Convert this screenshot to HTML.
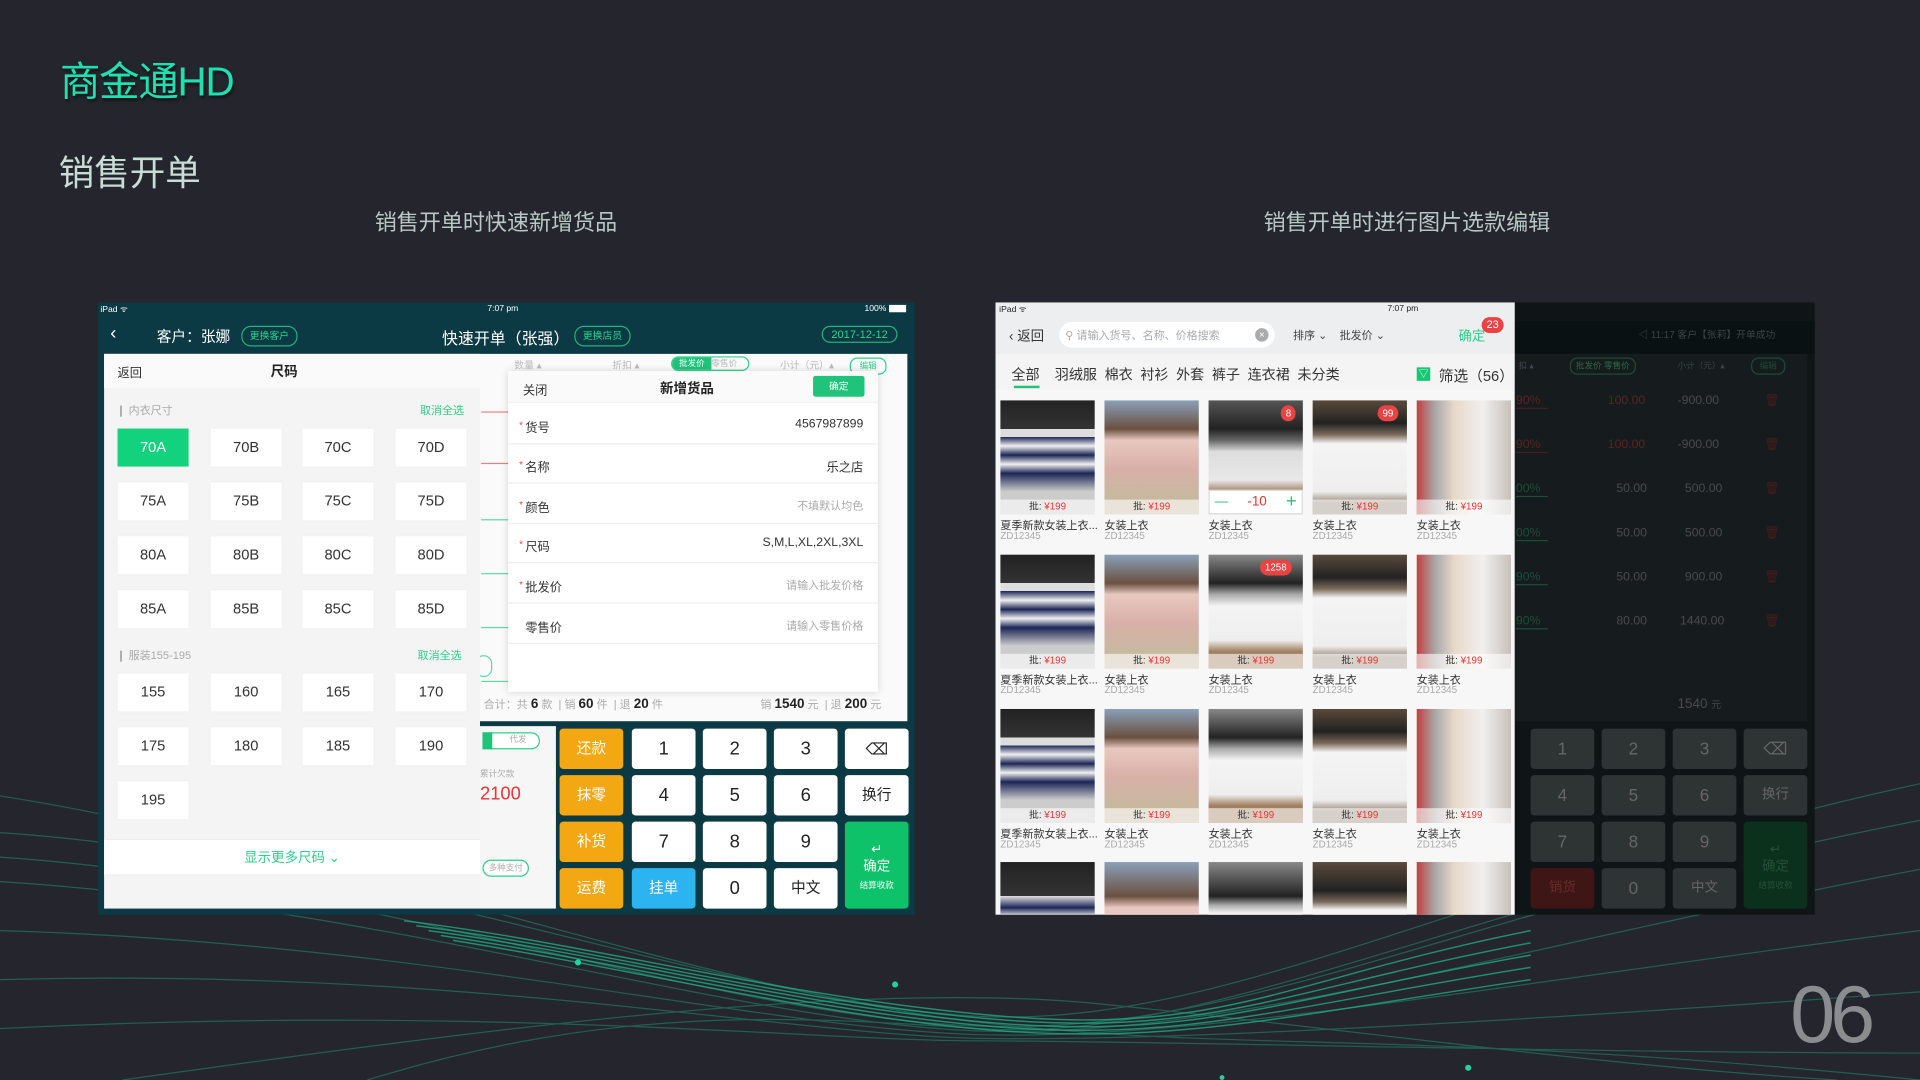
<!DOCTYPE html>
<html><head><meta charset="utf-8">
<style>
*{margin:0;padding:0;box-sizing:border-box}
html,body{width:1920px;height:1080px;overflow:hidden;background:#25252d}
#s{position:absolute;left:0;top:0;width:1568px;height:882px;transform:scale(1.22449);transform-origin:0 0;font-family:"Liberation Sans","Noto Sans CJK SC",sans-serif;background:#25252d;overflow:hidden}
.a{position:absolute}
.t{position:absolute;white-space:nowrap}
.sz{position:absolute;width:58px;height:31px;background:#fff;color:#333;font-size:12px;text-align:center;line-height:31px;box-shadow:0 0 2px rgba(0,0,0,.06)}
.row{position:absolute;left:415px;width:302px;height:32px;border-bottom:1px solid #eee;font-size:10px;color:#333}
.row .l{position:absolute;left:14px;top:10px}
.row .r{position:absolute;right:12px;top:10px}
.st{color:#e44;font-size:8px;position:absolute;left:9px;top:12px}
.k{position:absolute;width:52px;height:33px;border-radius:3px;background:#fff;color:#222;font-size:15px;text-align:center;line-height:33px}
.o{background:#f3a712;color:#fff;font-size:12px}
.c{position:absolute;width:77px;height:120px}
.im{position:absolute;left:0;top:0;width:77px;height:93px}
.pr{position:absolute;left:0;top:81px;width:77px;height:12px;background:rgba(255,255,255,.6);font-size:8px;text-align:center;line-height:12px;color:#333}
.pr b{color:#e33;font-weight:normal}
.nm{position:absolute;left:0;top:95px;font-size:9px;color:#333;white-space:nowrap}
.cd{position:absolute;left:0;top:106px;font-size:8px;color:#aaa}
.dk{position:absolute;width:52px;height:33px;border-radius:3px;background:#2e3334;color:#666;font-size:14px;text-align:center;line-height:33px}
.bd{position:absolute;background:#e94343;color:#fff;font-size:8px;border-radius:7px;height:13px;line-height:13px;padding:0 4px}
</style></head><body><div id="s">

<svg class="a" style="left:0;top:600px" width="1568" height="282" viewBox="0 600 1568 282">
<g fill="none" stroke="#1d9a78" stroke-width="1" opacity=".5">
<path d="M0 680 C300 700 600 820 800 830 S1200 720 1568 640"/>
<path d="M0 700 C300 720 580 830 800 838 S1200 740 1568 670"/>
<path d="M0 720 C320 740 600 835 800 842 S1250 770 1568 710"/>
<path d="M0 760 C350 770 620 840 800 845 S1250 800 1568 760"/>
<path d="M0 800 C380 790 640 845 800 848 S1300 830 1568 810"/>
<path d="M0 840 C400 820 660 850 800 850 S1300 860 1568 860"/>
<path d="M300 882 C500 820 650 830 800 840 S1100 780 1400 700"/>
<path d="M0 650 C260 690 580 810 800 835 S1150 840 1568 882"/>
<path d="M100 882 C400 840 700 800 900 820 S1300 870 1500 882"/>
</g>
<g fill="none" stroke="#20b088" stroke-width="1.2" opacity=".75">
<path d="M330 752 C480 770 640 815 820 830 S1050 800 1250 760"/>
<path d="M340 756 C490 775 650 820 820 833 S1050 808 1250 770"/>
<path d="M350 760 C500 780 660 824 820 836 S1050 815 1250 780"/>
<path d="M360 764 C510 786 670 828 820 839 S1050 822 1250 790"/>
<path d="M370 768 C520 792 680 832 820 842 S1050 830 1250 800"/>
</g>
<g fill="#1fd3a0"><circle cx="472" cy="786" r="2.5"/><circle cx="731" cy="804" r="2.5"/><circle cx="1199" cy="872" r="2.5"/><circle cx="998" cy="880" r="2"/></g>
</svg>

<div class="t" style="left:49px;top:40px;font-size:33px;color:#1ee0b0;letter-spacing:-1px;text-shadow:1px 2px 2px rgba(0,0,0,.5)">商金通HD</div>
<div class="t" style="left:48px;top:118px;font-size:29px;color:#c8ddd6">销售开单</div>
<div class="t" style="left:306px;top:168px;font-size:18px;color:#b8c8c4">销售开单时快速新增货品</div>
<div class="t" style="left:1032px;top:168px;font-size:18px;color:#b8c8c4">销售开单时进行图片选款编辑</div>
<div class="t" style="left:1462px;top:790px;font-size:66px;color:#8a8d90;letter-spacing:-4px;font-weight:300">06</div>

<!-- LEFT TABLET -->
<div class="a" style="left:80px;top:247px;width:667px;height:500px;background:#0c3a44"></div>
<div class="t" style="left:82px;top:249px;font-size:7px;color:#fff">iPad ᯤ</div>
<div class="t" style="left:398px;top:249px;font-size:7px;color:#fff">7:07 pm</div>
<div class="t" style="left:706px;top:249px;font-size:7px;color:#fff">100% <span style="display:inline-block;width:14px;height:6px;background:#fff;vertical-align:middle"></span></div>
<div class="t" style="left:90px;top:264px;font-size:15px;color:#fff">‹</div>
<div class="t" style="left:128px;top:266px;font-size:12px;color:#fff">客户：张娜</div>
<div class="t" style="left:197px;top:266px;font-size:8px;color:#2ad48a;border:1px solid #1fb377;border-radius:8px;padding:2px 6px">更换客户</div>
<div class="t" style="left:361px;top:266px;font-size:13px;color:#fff">快速开单（张强）</div>
<div class="t" style="left:469px;top:266px;font-size:8px;color:#2ad48a;border:1px solid #1fb377;border-radius:8px;padding:2px 6px">更换店员</div>
<div class="t" style="left:671px;top:266px;font-size:9px;color:#2ad48a;border:1px solid #1fb377;border-radius:8px;padding:1px 7px">2017-12-12</div>

<div class="a" style="left:392px;top:289px;width:349px;height:300px;background:#fafafa"></div>
<div class="t" style="left:420px;top:293px;font-size:8px;color:#bbb">数量 ▴</div>
<div class="t" style="left:500px;top:293px;font-size:8px;color:#bbb">折扣 ▴</div>
<div class="a" style="left:548px;top:291px;width:64px;height:12px;border:1px solid #2fd08a;border-radius:6px;font-size:7px;color:#fff;overflow:hidden"><span style="background:#1fc47a;display:inline-block;width:32px;text-align:center">批发价</span><span style="color:#bbb">零售价</span></div>
<div class="t" style="left:637px;top:293px;font-size:8px;color:#bbb">小计（元）▴</div>
<div class="t" style="left:694px;top:292px;font-size:7px;color:#2fd08a;border:1px solid #2fd08a;border-radius:6px;padding:1px 7px">编辑</div>
<div class="a" style="left:393px;top:336px;width:22px;height:1px;background:#f08080"></div>
<div class="a" style="left:393px;top:378px;width:22px;height:1px;background:#f08080"></div>
<div class="a" style="left:393px;top:424px;width:22px;height:1px;background:#5ddba5"></div>
<div class="a" style="left:393px;top:468px;width:22px;height:1px;background:#5ddba5"></div>
<div class="a" style="left:393px;top:512px;width:22px;height:1px;background:#5ddba5"></div>
<div class="a" style="left:393px;top:556px;width:22px;height:1px;background:#5ddba5"></div>
<div class="a" style="left:388px;top:535px;width:14px;height:18px;border:1px solid #5ddba5;border-radius:9px"></div>
<div class="t" style="left:395px;top:568px;font-size:9px;color:#aaa">合计：共 <b style="color:#222;font-size:11px">6</b> 款 &nbsp;| 销 <b style="color:#222;font-size:11px">60</b> 件 &nbsp;| 退 <b style="color:#222;font-size:11px">20</b> 件</div>
<div class="t" style="left:621px;top:568px;font-size:9px;color:#aaa">销 <b style="color:#222;font-size:11px">1540</b> 元 &nbsp;| 退 <b style="color:#222;font-size:11px">200</b> 元</div>

<div class="a" style="left:415px;top:303px;width:302px;height:262px;background:#fff;box-shadow:0 0 6px rgba(0,0,0,.15)"></div>
<div class="a" style="left:415px;top:303px;width:302px;height:26px;background:#fafafa;border-bottom:1px solid #eee"></div>
<div class="t" style="left:427px;top:310px;font-size:10px;color:#333">关闭</div>
<div class="t" style="left:539px;top:309px;font-size:11px;color:#222;font-weight:bold">新增货品</div>
<div class="t" style="left:664px;top:307px;width:42px;height:17px;background:#1fc47a;color:#fff;font-size:8px;text-align:center;line-height:17px;border-radius:2px">确定</div>
<div class="row" style="top:331px"><span class="st">*</span><span class="l">货号</span><span class="r">4567987899</span></div>
<div class="row" style="top:363px"><span class="st">*</span><span class="l">名称</span><span class="r">乐之店</span></div>
<div class="row" style="top:396px"><span class="st">*</span><span class="l">颜色</span><span class="r" style="color:#aaa;font-size:9px">不填默认均色</span></div>
<div class="row" style="top:428px"><span class="st">*</span><span class="l">尺码</span><span class="r">S,M,L,XL,2XL,3XL</span></div>
<div class="row" style="top:461px"><span class="st">*</span><span class="l">批发价</span><span class="r" style="color:#aaa;font-size:9px">请输入批发价格</span></div>
<div class="row" style="top:494px"><span class="l">零售价</span><span class="r" style="color:#aaa;font-size:9px">请输入零售价格</span></div>

<div class="a" style="left:85px;top:289px;width:307px;height:453px;background:#f4f4f4"></div>
<div class="a" style="left:85px;top:289px;width:307px;height:28px;background:#fafafa"></div>
<div class="t" style="left:96px;top:296px;font-size:10px;color:#333">返回</div>
<div class="t" style="left:221px;top:295px;font-size:11px;color:#222;font-weight:bold">尺码</div>
<div class="t" style="left:95px;top:328px;font-size:9px;color:#aaa">❙ 内衣尺寸</div>
<div class="t" style="left:343px;top:328px;font-size:9px;color:#2fd08a">取消全选</div>
<div class="sz" style="left:96px;top:350px;background:#13d27e;color:#fff">70A</div>
<div class="sz" style="left:172px;top:350px">70B</div><div class="sz" style="left:247px;top:350px">70C</div><div class="sz" style="left:323px;top:350px">70D</div>
<div class="sz" style="left:96px;top:394px">75A</div><div class="sz" style="left:172px;top:394px">75B</div><div class="sz" style="left:247px;top:394px">75C</div><div class="sz" style="left:323px;top:394px">75D</div>
<div class="sz" style="left:96px;top:438px">80A</div><div class="sz" style="left:172px;top:438px">80B</div><div class="sz" style="left:247px;top:438px">80C</div><div class="sz" style="left:323px;top:438px">80D</div>
<div class="sz" style="left:96px;top:482px">85A</div><div class="sz" style="left:172px;top:482px">85B</div><div class="sz" style="left:247px;top:482px">85C</div><div class="sz" style="left:323px;top:482px">85D</div>
<div class="t" style="left:95px;top:528px;font-size:9px;color:#aaa">❙ 服装155-195</div>
<div class="t" style="left:341px;top:528px;font-size:9px;color:#2fd08a">取消全选</div>
<div class="sz" style="left:96px;top:550px">155</div><div class="sz" style="left:172px;top:550px">160</div><div class="sz" style="left:247px;top:550px">165</div><div class="sz" style="left:323px;top:550px">170</div>
<div class="sz" style="left:96px;top:594px">175</div><div class="sz" style="left:172px;top:594px">180</div><div class="sz" style="left:247px;top:594px">185</div><div class="sz" style="left:323px;top:594px">190</div>
<div class="sz" style="left:96px;top:638px">195</div>
<div class="a" style="left:85px;top:685px;width:307px;height:30px;background:#fff;border-top:1px solid #eee;border-bottom:1px solid #eee;font-size:11px;color:#2fd08a;text-align:center;line-height:30px">显示更多尺码 ⌄</div>

<div class="a" style="left:392px;top:593px;width:62px;height:149px;background:#f6f6f6"></div>
<div class="a" style="left:394px;top:598px;width:47px;height:14px;border:1px solid #2fd08a;border-radius:7px;font-size:7px;color:#aaa;text-align:right;padding-right:10px;line-height:12px;background:#fff">代发</div>
<div class="a" style="left:394px;top:598px;width:8px;height:14px;background:#1fc47a"></div>
<div class="t" style="left:392px;top:627px;font-size:7px;color:#aaa">累计欠款</div>
<div class="t" style="left:392px;top:640px;font-size:15px;color:#e33">2100</div>
<div class="t" style="left:394px;top:702px;font-size:7px;color:#aaa;border:1px solid #2fd08a;border-radius:7px;padding:1px 4px;background:#fff">多种支付</div>
<div class="k o" style="left:457px;top:595px">还款</div>
<div class="k o" style="left:457px;top:633px">抹零</div>
<div class="k o" style="left:457px;top:671px">补货</div>
<div class="k o" style="left:457px;top:709px">运费</div>
<div class="k" style="left:516px;top:595px">1</div><div class="k" style="left:574px;top:595px">2</div><div class="k" style="left:632px;top:595px">3</div>
<div class="k" style="left:516px;top:633px">4</div><div class="k" style="left:574px;top:633px">5</div><div class="k" style="left:632px;top:633px">6</div>
<div class="k" style="left:516px;top:671px">7</div><div class="k" style="left:574px;top:671px">8</div><div class="k" style="left:632px;top:671px">9</div>
<div class="k" style="left:516px;top:709px;background:#2bb4ef;color:#fff;font-size:12px">挂单</div>
<div class="k" style="left:574px;top:709px">0</div>
<div class="k" style="left:632px;top:709px;font-size:12px">中文</div>
<div class="k" style="left:690px;top:595px;font-size:13px">⌫</div>
<div class="k" style="left:690px;top:633px;font-size:12px">换行</div>
<div class="k" style="left:690px;top:671px;height:71px;background:#0ec26a;color:#fff;font-size:11px;line-height:14px;padding-top:16px">↵<br>确定<br><span style="font-size:7px">结算收款</span></div>

<!-- RIGHT dim panel -->
<div class="a" style="left:1237px;top:247px;width:245px;height:500px;background:#0f1517"></div>
<div class="a" style="left:1237px;top:262px;width:245px;height:27px;background:#0a1113"></div>
<div class="t" style="left:1338px;top:268px;font-size:8px;color:#3a4546">◁ 11:17 客户【张莉】开单成功</div>
<div class="a" style="left:1237px;top:289px;width:239px;height:300px;background:#161c1d"></div>
<div class="t" style="left:1240px;top:294px;font-size:7px;color:#445">扣 ▴</div>
<div class="t" style="left:1282px;top:292px;font-size:7px;color:#2a6a4a;border:1px solid #1e4a34;border-radius:6px;padding:1px 4px">批发价 零售价</div>
<div class="t" style="left:1370px;top:294px;font-size:7px;color:#3a4446">小计（元）▴</div>
<div class="t" style="left:1430px;top:292px;font-size:7px;color:#1e4a34;border:1px solid #1e4a34;border-radius:6px;padding:1px 6px">编辑</div>
<div class="t" style="left:1238px;top:322px;font-size:10px;color:#5a2222;border-bottom:1px solid #4a1c1c">90%&nbsp;&nbsp;</div>
<div class="t" style="left:1238px;top:358px;font-size:10px;color:#5a2222;border-bottom:1px solid #4a1c1c">90%&nbsp;&nbsp;</div>
<div class="t" style="left:1238px;top:394px;font-size:10px;color:#1a4e36;border-bottom:1px solid #1a4e36">00%&nbsp;&nbsp;</div>
<div class="t" style="left:1238px;top:430px;font-size:10px;color:#1a4e36;border-bottom:1px solid #1a4e36">00%&nbsp;&nbsp;</div>
<div class="t" style="left:1238px;top:466px;font-size:10px;color:#1a4e36;border-bottom:1px solid #1a4e36">90%&nbsp;&nbsp;</div>
<div class="t" style="left:1238px;top:502px;font-size:10px;color:#1a4e36;border-bottom:1px solid #1a4e36">90%&nbsp;&nbsp;</div>
<div class="t" style="left:1313px;top:322px;font-size:10px;color:#5a2222">100.00</div><div class="t" style="left:1370px;top:322px;font-size:10px;color:#4a4a4a">-900.00</div>
<div class="t" style="left:1313px;top:358px;font-size:10px;color:#5a2222">100.00</div><div class="t" style="left:1370px;top:358px;font-size:10px;color:#4a4a4a">-900.00</div>
<div class="t" style="left:1320px;top:394px;font-size:10px;color:#4a4a4a">50.00</div><div class="t" style="left:1376px;top:394px;font-size:10px;color:#4a4a4a">500.00</div>
<div class="t" style="left:1320px;top:430px;font-size:10px;color:#4a4a4a">50.00</div><div class="t" style="left:1376px;top:430px;font-size:10px;color:#4a4a4a">500.00</div>
<div class="t" style="left:1320px;top:466px;font-size:10px;color:#4a4a4a">50.00</div><div class="t" style="left:1376px;top:466px;font-size:10px;color:#4a4a4a">900.00</div>
<div class="t" style="left:1320px;top:502px;font-size:10px;color:#4a4a4a">80.00</div><div class="t" style="left:1372px;top:502px;font-size:10px;color:#4a4a4a">1440.00</div>
<div class="t" style="left:1441px;top:322px;font-size:10px;color:#4a1c1c">🗑</div>
<div class="t" style="left:1441px;top:358px;font-size:10px;color:#4a1c1c">🗑</div>
<div class="t" style="left:1441px;top:394px;font-size:10px;color:#4a1c1c">🗑</div>
<div class="t" style="left:1441px;top:430px;font-size:10px;color:#4a1c1c">🗑</div>
<div class="t" style="left:1441px;top:466px;font-size:10px;color:#4a1c1c">🗑</div>
<div class="t" style="left:1441px;top:502px;font-size:10px;color:#4a1c1c">🗑</div>
<div class="t" style="left:1370px;top:569px;font-size:11px;color:#4a4a4a">1540 <span style="font-size:8px">元</span></div>
<div class="dk" style="left:1250px;top:595px">1</div><div class="dk" style="left:1308px;top:595px">2</div><div class="dk" style="left:1366px;top:595px">3</div><div class="dk" style="left:1424px;top:595px">⌫</div>
<div class="dk" style="left:1250px;top:633px">4</div><div class="dk" style="left:1308px;top:633px">5</div><div class="dk" style="left:1366px;top:633px">6</div><div class="dk" style="left:1424px;top:633px;font-size:11px">换行</div>
<div class="dk" style="left:1250px;top:671px">7</div><div class="dk" style="left:1308px;top:671px">8</div><div class="dk" style="left:1366px;top:671px">9</div>
<div class="dk" style="left:1250px;top:709px;background:#3e1616;color:#6a2a2a;font-size:11px">销货</div><div class="dk" style="left:1308px;top:709px">0</div><div class="dk" style="left:1366px;top:709px;font-size:11px">中文</div>
<div class="dk" style="left:1424px;top:671px;height:71px;background:#0b301c;color:#235234;font-size:11px;line-height:14px;padding-top:16px">↵<br>确定<br><span style="font-size:7px">结算收款</span></div>

<!-- RIGHT light panel -->
<div class="a" style="left:813px;top:247px;width:424px;height:500px;background:#f7f7f7;overflow:hidden">
 <div class="a" style="left:0;top:0;width:424px;height:42px;background:#eceeef"></div>
 <div class="t" style="left:3px;top:2px;font-size:7px;color:#222">iPad ᯤ</div>
 <div class="t" style="left:320px;top:2px;font-size:7px;color:#222">7:07 pm</div>
 <div class="t" style="left:11px;top:19px;font-size:11px;color:#333">‹ 返回</div>
 <div class="a" style="left:52px;top:16px;width:176px;height:21px;background:#fff;border-radius:11px"></div>
 <div class="t" style="left:57px;top:20px;font-size:9px;color:#aaa">⚲ 请输入货号、名称、价格搜索</div>
 <div class="a" style="left:212px;top:21px;width:11px;height:11px;border-radius:50%;background:#aaa;color:#fff;font-size:8px;text-align:center;line-height:11px">×</div>
 <div class="t" style="left:243px;top:20px;font-size:9px;color:#444">排序 ⌄ &nbsp;&nbsp; 批发价 ⌄</div>
 <div class="t" style="left:378px;top:19px;font-size:11px;color:#2fd08a">确定</div>
 <div class="bd" style="left:397px;top:12px;font-size:9px">23</div>
 <div class="a" style="left:0;top:42px;width:424px;height:30px;background:#f4f4f4"></div>
 <div class="t" style="left:13px;top:51px;font-size:11.5px;color:#333;word-spacing:3px">全部&nbsp;&nbsp;羽绒服&nbsp;棉衣&nbsp;衬衫&nbsp;外套&nbsp;裤子&nbsp;连衣裙&nbsp;未分类</div>
 <div class="a" style="left:15px;top:68px;width:21px;height:2px;background:#1fc47a"></div>
 <div class="a" style="left:344px;top:53px;width:11px;height:11px;background:#13c870;color:#fff;font-size:8px;text-align:center;line-height:11px">▽</div>
 <div class="t" style="left:362px;top:51px;font-size:12px;color:#333">筛选（56）</div>
</div>

<div class="a" style="left:813px;top:247px;width:424px;height:500px;overflow:hidden">
<div class="c" style="left:4px;top:80px"><div class="im" style="background:linear-gradient(#222 0,#333 25%,#ddd 25%,#ddd 32%,#1c2656 32%,#f0f0f0 40%,#1c2656 48%,#f0f0f0 56%,#1c2656 64%,#ccc 80%)"></div><div class="pr">批: <b>¥199</b></div><div class="nm">夏季新款女装上衣...</div><div class="cd">ZD12345</div></div>
<div class="c" style="left:89px;top:80px"><div class="im" style="background:linear-gradient(#8aa0b8 0,#6a5040 25%,#e8c8c0 35%,#d8b0a8 60%,#c8b8a0 85%)"></div><div class="pr">批: <b>¥199</b></div><div class="nm">女装上衣</div><div class="cd">ZD12345</div></div>
<div class="c" style="left:174px;top:80px"><div class="im" style="background:linear-gradient(#555 0,#222 25%,#666 35%,#ddd 45%,#e8e8e8 70%,#a08060 80%)"></div><div class="a" style="left:0;top:73px;width:77px;height:20px;background:#fff;border:1px solid #ddd;font-size:11px;color:#e33;text-align:center;line-height:18px"><span style="color:#1fc47a;float:left;margin-left:4px">—</span>-10<span style="color:#1fc47a;float:right;margin-right:4px;font-size:15px">+</span></div><div class="bd" style="left:59px;top:4px">8</div><div class="nm">女装上衣</div><div class="cd">ZD12345</div></div>
<div class="c" style="left:259px;top:80px"><div class="im" style="background:linear-gradient(#5a4a3a 0,#222 20%,#7a6a5a 30%,#f4f4f4 38%,#eee 80%,#9a8a7a 90%)"></div><div class="pr">批: <b>¥199</b></div><div class="bd" style="left:53px;top:4px">99</div><div class="nm">女装上衣</div><div class="cd">ZD12345</div></div>
<div class="c" style="left:344px;top:80px"><div class="im" style="background:linear-gradient(90deg,#c04040 0,#aaa 20%,#e8d8c8 40%,#f0f0f0 70%,#c8c0b8)"></div><div class="pr">批: <b>¥199</b></div><div class="nm">女装上衣</div><div class="cd">ZD12345</div></div>
<div class="c" style="left:4px;top:206px"><div class="im" style="background:linear-gradient(#222 0,#333 25%,#ddd 25%,#ddd 32%,#1c2656 32%,#f0f0f0 40%,#1c2656 48%,#f0f0f0 56%,#1c2656 64%,#ccc 80%)"></div><div class="pr">批: <b>¥199</b></div><div class="nm">夏季新款女装上衣...</div><div class="cd">ZD12345</div></div>
<div class="c" style="left:89px;top:206px"><div class="im" style="background:linear-gradient(#8aa0b8 0,#6a5040 25%,#e8c8c0 35%,#d8b0a8 60%,#c8b8a0 85%)"></div><div class="pr">批: <b>¥199</b></div><div class="nm">女装上衣</div><div class="cd">ZD12345</div></div>
<div class="c" style="left:174px;top:206px"><div class="im" style="background:linear-gradient(#888 0,#222 25%,#aaa 35%,#f4f4f4 45%,#eee 75%,#a08060 85%)"></div><div class="pr">批: <b>¥199</b></div><div class="bd" style="left:42px;top:4px">1258</div><div class="nm">女装上衣</div><div class="cd">ZD12345</div></div>
<div class="c" style="left:259px;top:206px"><div class="im" style="background:linear-gradient(#5a4a3a 0,#222 20%,#7a6a5a 30%,#f4f4f4 38%,#eee 80%,#9a8a7a 90%)"></div><div class="pr">批: <b>¥199</b></div><div class="nm">女装上衣</div><div class="cd">ZD12345</div></div>
<div class="c" style="left:344px;top:206px"><div class="im" style="background:linear-gradient(90deg,#c04040 0,#aaa 20%,#e8d8c8 40%,#f0f0f0 70%,#c8c0b8)"></div><div class="pr">批: <b>¥199</b></div><div class="nm">女装上衣</div><div class="cd">ZD12345</div></div>
<div class="c" style="left:4px;top:332px"><div class="im" style="background:linear-gradient(#222 0,#333 25%,#ddd 25%,#ddd 32%,#1c2656 32%,#f0f0f0 40%,#1c2656 48%,#f0f0f0 56%,#1c2656 64%,#ccc 80%)"></div><div class="pr">批: <b>¥199</b></div><div class="nm">夏季新款女装上衣...</div><div class="cd">ZD12345</div></div>
<div class="c" style="left:89px;top:332px"><div class="im" style="background:linear-gradient(#8aa0b8 0,#6a5040 25%,#e8c8c0 35%,#d8b0a8 60%,#c8b8a0 85%)"></div><div class="pr">批: <b>¥199</b></div><div class="nm">女装上衣</div><div class="cd">ZD12345</div></div>
<div class="c" style="left:174px;top:332px"><div class="im" style="background:linear-gradient(#888 0,#222 25%,#aaa 35%,#f4f4f4 45%,#eee 75%,#a08060 85%)"></div><div class="pr">批: <b>¥199</b></div><div class="nm">女装上衣</div><div class="cd">ZD12345</div></div>
<div class="c" style="left:259px;top:332px"><div class="im" style="background:linear-gradient(#5a4a3a 0,#222 20%,#7a6a5a 30%,#f4f4f4 38%,#eee 80%,#9a8a7a 90%)"></div><div class="pr">批: <b>¥199</b></div><div class="nm">女装上衣</div><div class="cd">ZD12345</div></div>
<div class="c" style="left:344px;top:332px"><div class="im" style="background:linear-gradient(90deg,#c04040 0,#aaa 20%,#e8d8c8 40%,#f0f0f0 70%,#c8c0b8)"></div><div class="pr">批: <b>¥199</b></div><div class="nm">女装上衣</div><div class="cd">ZD12345</div></div>
<div class="c" style="left:4px;top:457px"><div class="im" style="background:linear-gradient(#222 0,#333 30%,#ddd 30%,#1c2656 40%,#f0f0f0 48%)"></div></div>
<div class="c" style="left:89px;top:457px"><div class="im" style="background:linear-gradient(#8aa0b8 0,#6a5040 30%,#e8c8c0 40%)"></div></div>
<div class="c" style="left:174px;top:457px"><div class="im" style="background:linear-gradient(#888 0,#222 30%,#aaa 38%,#f4f4f4 45%)"></div></div>
<div class="c" style="left:259px;top:457px"><div class="im" style="background:linear-gradient(#5a4a3a 0,#222 25%,#7a6a5a 35%,#f4f4f4 42%)"></div></div>
<div class="c" style="left:344px;top:457px"><div class="im" style="background:linear-gradient(90deg,#c04040 0,#aaa 20%,#e8d8c8 40%,#f0f0f0 70%,#c8c0b8)"></div></div>
</div>

</div></body></html>
